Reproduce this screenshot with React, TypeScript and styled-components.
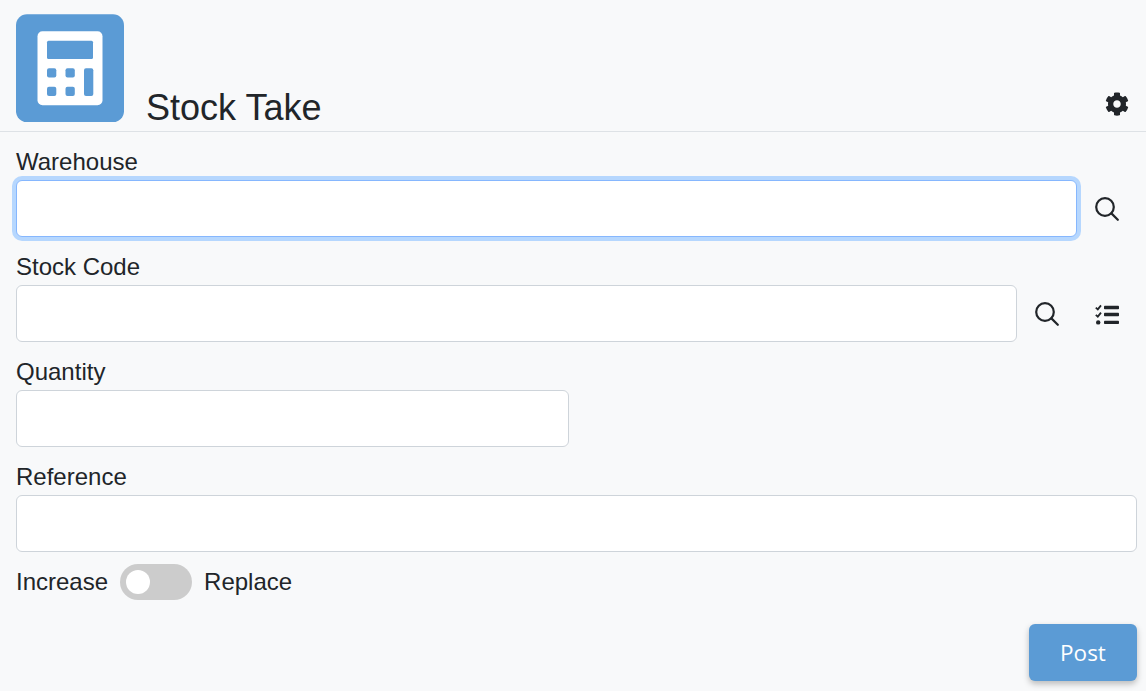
import React from "react";
import styled, { createGlobalStyle } from "styled-components";
import { FaCog } from "react-icons/fa";

const GlobalStyle = createGlobalStyle`
  html, body {
    margin: 0;
    padding: 0;
    background: #f8f9fa;
  }
  * {
    box-sizing: border-box;
  }
  body {
    color: #212529;
    font-family: "Liberation Sans", Arial, sans-serif;
  }
`;

const Page = styled.div`
  width: 1146px;
  height: 691px;
  overflow: hidden;
`;

const Header = styled.header`
  display: flex;
  align-items: flex-end;
  height: 132px;
  padding: 15px 17px 9px 16px;
  border-bottom: 1px solid #dee2e6;
`;

const AppIcon = styled.svg`
  display: block;
  width: 108px;
  height: 108px;
`;

const Title = styled.h1`
  flex: 1;
  margin: 0 0 -7px 22px;
  font-size: 36px;
  font-weight: 400;
  line-height: 42px;
`;

const SettingsIcon = styled.span`
  display: flex;
  margin-bottom: 6px;
  font-size: 24px;
  color: #212529;
`;

const Form = styled.form`
  display: flex;
  flex-direction: column;
  padding: 12px 9px 0 16px;
`;

const Field = styled.div`
  display: flex;
  flex-direction: column;
  margin-bottom: 12px;
`;

const Label = styled.label`
  height: 36px;
  font-size: 24px;
  line-height: 36px;
`;

const InputRow = styled.div`
  display: flex;
  align-items: center;
`;

const TextInput = styled.input<{ $focused?: boolean; $width?: number }>`
  display: block;
  flex: ${(p) => (p.$width ? `0 0 ${p.$width}px` : "1")};
  min-width: 0;
  height: 57px;
  padding: 0 12px;
  background: #fff;
  border: 1px solid ${(p) => (p.$focused ? "#86b7fe" : "#ced4da")};
  border-radius: 6px;
  outline: none;
  box-shadow: ${(p) => (p.$focused ? "0 0 0 4px #b6d7fe" : "none")};
  font-size: 24px;
`;

const IconButton = styled.button`
  display: flex;
  flex: 0 0 60px;
  align-items: center;
  justify-content: center;
  height: 57px;
  padding: 0;
  background: none;
  border: 0;
  color: #212529;
`;

const ModeRow = styled.div`
  display: flex;
  align-items: center;
  height: 36px;
  font-size: 24px;
`;

const Toggle = styled.span`
  display: flex;
  align-items: center;
  width: 72px;
  height: 36px;
  margin: 0 12px;
  padding-left: 6px;
  background: #ccc;
  border-radius: 18px;
`;

const ToggleKnob = styled.span`
  width: 24px;
  height: 24px;
  background: #fff;
  border-radius: 50%;
`;

const Actions = styled.div`
  display: flex;
  justify-content: flex-end;
  margin-top: 24px;
`;

const PostButton = styled.button`
  width: 108px;
  height: 57px;
  padding: 0;
  background: #5b9bd5;
  border: 0;
  border-radius: 6px;
  box-shadow: 0 3px 6px rgba(0, 0, 0, 0.25);
  color: #fff;
  font-family: "Open Sans", "Noto Sans", sans-serif;
  font-size: 22.5px;
`;

const SearchIcon = () => (
  <svg width="24" height="24" viewBox="0 0 24 24" fill="none" stroke="currentColor" strokeWidth="2.2">
    <circle cx="10" cy="10" r="8.8" />
    <path d="M16.4 16.4 22.8 22.8" strokeLinecap="round" />
  </svg>
);

const TasksIcon = () => (
  <svg width="24" height="24" viewBox="0 0 24 24" fill="currentColor">
    <rect x="9" y="3.8" width="15" height="3.4" rx="0.8" />
    <rect x="9" y="10.8" width="15" height="3.4" rx="0.8" />
    <rect x="9" y="18.7" width="15" height="3.4" rx="0.8" />
    <path d="M0.8 5.6 2.8 7.4 6 3.4M0.8 12.8 2.8 14.6 6 10.6" fill="none" stroke="currentColor" strokeWidth="1.8" />
    <circle cx="3.2" cy="20.4" r="2.2" />
  </svg>
);

const App = () => {
  return (
    <Page>
      <GlobalStyle />
      <Header>
        <AppIcon viewBox="0 -0.3 108 108">
          <rect width="108" height="108" rx="11" fill="#5b9bd5" />
          <rect x="21.5" y="17" width="65" height="74" rx="5" fill="#fff" />
          <rect x="31" y="26.4" width="46" height="18.3" rx="1.5" fill="#5b9bd5" />
          <rect x="31" y="54" width="9.3" height="9.3" rx="2" fill="#5b9bd5" />
          <rect x="49.5" y="54" width="9.3" height="9.3" rx="2" fill="#5b9bd5" />
          <rect x="31" y="72.4" width="9.3" height="9.3" rx="2" fill="#5b9bd5" />
          <rect x="49.5" y="72.4" width="9.3" height="9.3" rx="2" fill="#5b9bd5" />
          <rect x="68" y="54" width="9.3" height="27.7" rx="2" fill="#5b9bd5" />
        </AppIcon>
        <Title>Stock Take</Title>
        <SettingsIcon>
          <FaCog />
        </SettingsIcon>
      </Header>
      <Form>
        <Field>
          <Label>Warehouse</Label>
          <InputRow>
            <TextInput $focused />
            <IconButton type="button">
              <SearchIcon />
            </IconButton>
          </InputRow>
        </Field>
        <Field>
          <Label>Stock Code</Label>
          <InputRow>
            <TextInput />
            <IconButton type="button">
              <SearchIcon />
            </IconButton>
            <IconButton type="button">
              <TasksIcon />
            </IconButton>
          </InputRow>
        </Field>
        <Field>
          <Label>Quantity</Label>
          <InputRow>
            <TextInput $width={553} />
          </InputRow>
        </Field>
        <Field>
          <Label>Reference</Label>
          <InputRow>
            <TextInput />
          </InputRow>
        </Field>
        <ModeRow>
          Increase
          <Toggle>
            <ToggleKnob />
          </Toggle>
          Replace
        </ModeRow>
        <Actions>
          <PostButton type="button">Post</PostButton>
        </Actions>
      </Form>
    </Page>
  );
};

export default App;
